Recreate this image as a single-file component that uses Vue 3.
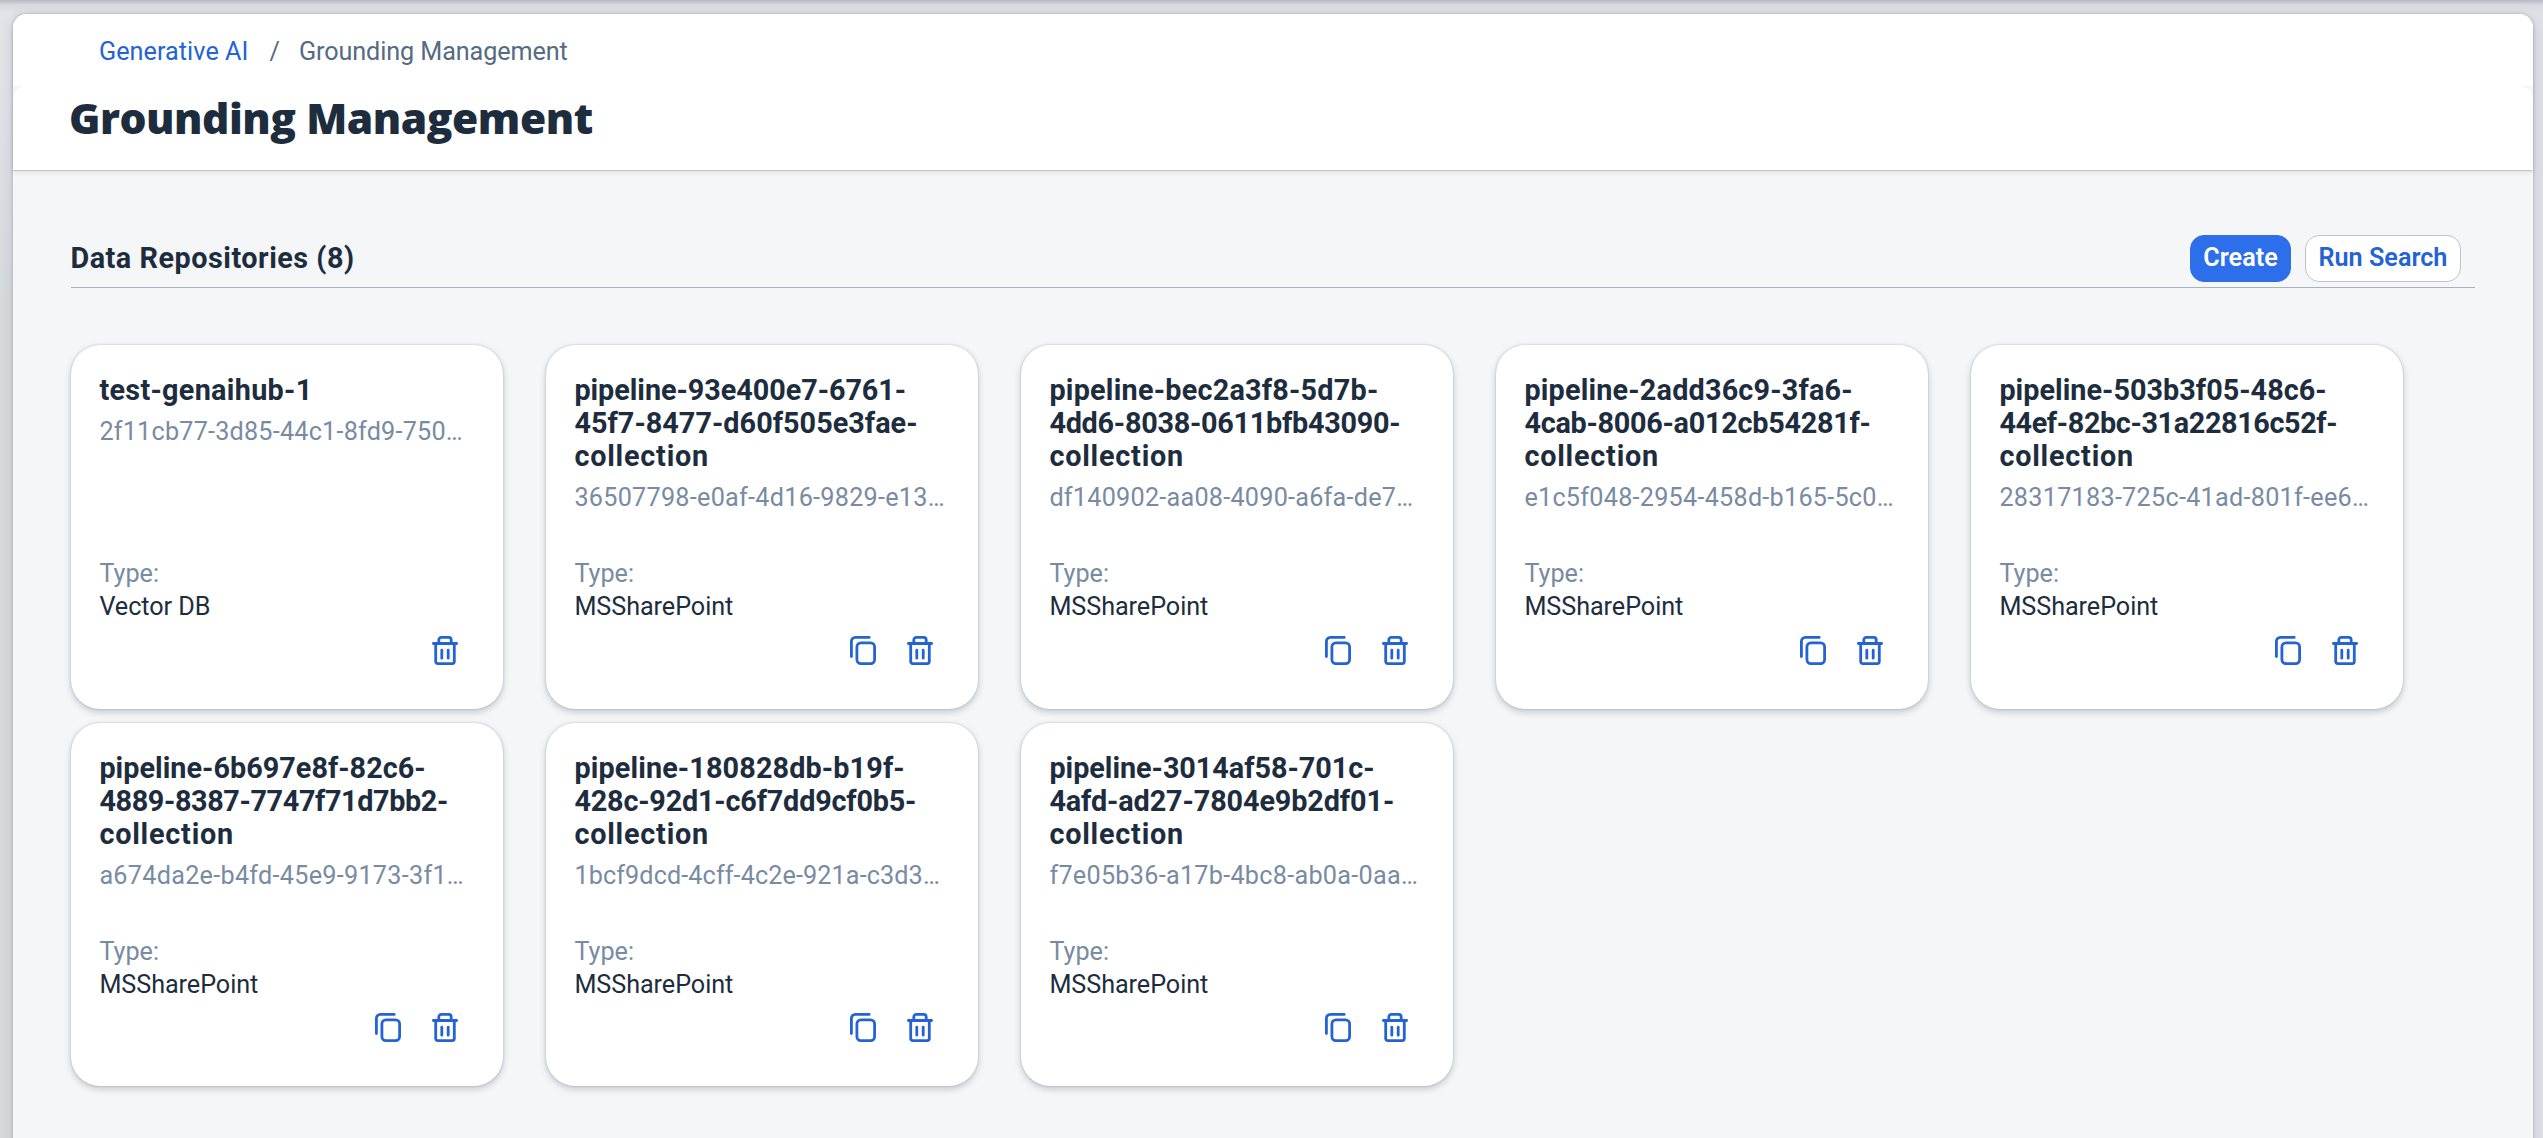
<script setup>
const type = 'MSSharePoint'
const tail = { text: 'collection', track: 0.78 }
const repositories = [
  { lines: [{ text: 'test-genaihub-1', track: 0.3 }], id: '2f11cb77-3d85-44c1-8fd9-750…', track: 0.22, type: 'Vector DB', copy: false },
  { lines: [{ text: 'pipeline-93e400e7-6761-', track: -0.05 }, { text: '45f7-8477-d60f505e3fae-', track: 0.03 }, tail], id: '36507798-e0af-4d16-9829-e13…', track: 0.27, type, copy: true },
  { lines: [{ text: 'pipeline-bec2a3f8-5d7b-', track: 0.22 }, { text: '4dd6-8038-0611bfb43090-', track: -0.26 }, tail], id: 'df140902-aa08-4090-a6fa-de7…', track: 0.25, type, copy: true },
  { lines: [{ text: 'pipeline-2add36c9-3fa6-', track: 0.18 }, { text: '4cab-8006-a012cb54281f-', track: -0.27 }, tail], id: 'e1c5f048-2954-458d-b165-5c0…', track: 0.26, type, copy: true },
  { lines: [{ text: 'pipeline-503b3f05-48c6-', track: 0.02 }, { text: '44ef-82bc-31a22816c52f-', track: -0.38 }, tail], id: '28317183-725c-41ad-801f-ee6…', track: 0.28, type, copy: true },
  { lines: [{ text: 'pipeline-6b697e8f-82c6-', track: 0.02 }, { text: '4889-8387-7747f71d7bb2-', track: -0.38 }, tail], id: 'a674da2e-b4fd-45e9-9173-3f1…', track: 0.28, type, copy: true },
  { lines: [{ text: 'pipeline-180828db-b19f-', track: 0.12 }, { text: '428c-92d1-c6f7dd9cf0b5-', track: -0.19 }, tail], id: '1bcf9dcd-4cff-4c2e-921a-c3d3…', track: 0.11, type, copy: true },
  { lines: [{ text: 'pipeline-3014af58-701c-', track: -0.04 }, { text: '4afd-ad27-7804e9b2df01-', track: -0.11 }, tail], id: 'f7e05b36-a17b-4bc8-ab0a-0aa…', track: 0.28, type, copy: true },
]
</script>

<template>
  <div class="shell">
    <main class="page">
      <header class="header">
        <nav class="crumbs">
          <a class="crumb-link">Generative AI</a>
          <span class="crumb-sep">/</span>
          <span class="crumb-current">Grounding Management</span>
        </nav>
        <div class="title-bar">
          <h1 class="title">Grounding Management</h1>
        </div>
      </header>

      <section class="content">
        <div class="toolbar">
          <h2 class="toolbar-title">Data Repositories (8)</h2>
          <div class="toolbar-actions">
            <button class="btn btn-primary">Create</button>
            <button class="btn btn-default">Run Search</button>
          </div>
        </div>

        <div class="grid">
          <article v-for="repo in repositories" :key="repo.id" class="card">
            <div class="card-head">
              <h3 class="card-title">
                <span
                  v-for="line in repo.lines"
                  :key="line.text"
                  class="card-line"
                  :style="{ letterSpacing: line.track + 'px' }"
                >{{ line.text }}</span>
              </h3>
              <div class="card-id" :style="{ letterSpacing: repo.track + 'px' }">{{ repo.id }}</div>
            </div>
            <div class="card-label">Type:</div>
            <div class="card-value">{{ repo.type }}</div>
            <div class="card-actions">
              <svg v-if="repo.copy" class="icon" viewBox="0 0 26 29">
                <path d="M1.4 20.5V5.4a4 4 0 0 1 4-4h13.8" />
                <rect x="6.9" y="6.9" width="17.7" height="20.7" rx="4" />
              </svg>
              <svg class="icon" viewBox="0 0 26 29">
                <path d="M1.4 7.5h23.2M6.8 7.5V3.9a2.5 2.5 0 0 1 2.5-2.5h7.4a2.5 2.5 0 0 1 2.5 2.5v3.6M3.7 7.5v18.1a2 2 0 0 0 2 2h14.6a2 2 0 0 0 2-2V7.5M9.8 14.2v8M16.2 14.2v8" />
              </svg>
            </div>
          </article>
        </div>
      </section>
    </main>
  </div>
</template>

<style>
body {
  background: #dcdfe3;
}
</style>

<style scoped>
.shell {
  box-sizing: border-box;
  height: 1138px;
  padding: 14px 10px 0 13px;
  overflow: hidden;
  background:
    linear-gradient(#b5b8c3 0, rgba(214, 216, 222, 0.8) 5px, rgba(225, 227, 231, 0) 12px),
    linear-gradient(#e1e3e7 60px, rgba(225, 227, 231, 0) 300px) left / 13px 100% no-repeat,
    linear-gradient(90deg, #d5dadd 13px, #dfe0e5 13px);
  font-family: Roboto, "Liberation Sans", sans-serif;
  color: #1d2d3e;
}
.page {
  height: 1140px;
  border-radius: 14px 14px 0 0;
  background: #f5f6f8;
  box-shadow: 0 0 3px rgba(34, 53, 72, 0.25), 0 4px 14px rgba(34, 53, 72, 0.12);
}
.header {
  height: 156px;
  border-radius: 14px 14px 0 0;
  background: #f5f6f8;
  box-shadow: 0 1px 1px rgba(34, 53, 72, 0.2), 0 2px 5px rgba(34, 53, 72, 0.1);
}
.crumbs {
  box-sizing: border-box;
  display: flex;
  height: 72px;
  padding-left: 86px;
  border-radius: 14px 14px 0 0;
  background: #fff;
  font-size: 25.2px;
  line-height: 76px;
}
.crumb-link {
  width: 170.5px;
  letter-spacing: 0.05px;
  color: #2463d4;
}
.crumb-sep {
  width: 29.5px;
  color: #556b82;
}
.crumb-current {
  color: #556b82;
  letter-spacing: -0.1px;
}
.title-bar {
  height: 84px;
  padding-left: 56px;
  border-radius: 14px 14px 0 0;
  background: #fff;
}
.title {
  margin: 0;
  font-family: "Open Sans", Roboto, sans-serif;
  font-size: 42.5px;
  font-weight: 800;
  line-height: 64px;
  letter-spacing: -0.47px;
}
.content {
  padding: 58px 58px 0;
}
.toolbar {
  box-sizing: border-box;
  display: flex;
  height: 60px;
  padding: 7px 14px 5px 0;
  justify-content: space-between;
  border-bottom: 1px solid #a8b1bd;
}
.toolbar-title {
  margin: 0 0 0 -0.6px;
  font-size: 28.8px;
  font-weight: 700;
  line-height: 47px;
  letter-spacing: 0.52px;
}
.toolbar-actions {
  display: flex;
  gap: 14px;
}
.btn {
  box-sizing: border-box;
  height: 47px;
  padding: 0 0 2px;
  border: 1px solid #bcc3ca;
  border-radius: 14px;
  font: 600 25.2px/43px Roboto, "Liberation Sans", sans-serif;
}
.btn-primary {
  width: 101px;
  border-color: #2d6eeb;
  background: #2d6eeb;
  color: #fff;
}
.btn-default {
  width: 156px;
  background: #fff;
  color: #2463d4;
}
.grid {
  display: grid;
  grid-template-columns: repeat(5, 432px);
  grid-template-rows: 364px 363px;
  gap: 14px 43px;
  margin-top: 57px;
}
.card {
  box-sizing: border-box;
  display: flex;
  flex-direction: column;
  padding: 29px 29px 44px 28.4px;
  border-radius: 29px;
  background: #fff;
  box-shadow: 0 0 2px rgba(34, 53, 72, 0.28), 0 3px 7px rgba(34, 53, 72, 0.24);
}
.card-head {
  height: 183px;
}
.card-title {
  margin: 0;
  font-size: 28.8px;
  font-weight: 700;
  line-height: 33px;
}
.card-line {
  display: block;
  white-space: nowrap;
}
.card-id {
  margin-top: 9px;
  color: #788ba3;
  font-size: 25.2px;
  line-height: 32px;
  white-space: nowrap;
}
.card-label,
.card-value {
  font-size: 25.2px;
  line-height: 33px;
}
.card-label {
  color: #788ba3;
}
.card-value {
  letter-spacing: -0.05px;
}
.card-actions {
  display: flex;
  justify-content: flex-end;
  gap: 31.5px;
  margin-top: auto;
  padding-right: 16px;
}
.icon {
  width: 26px;
  height: 29px;
  fill: none;
  stroke: #2463d4;
  stroke-width: 2.8;
  stroke-linecap: round;
  stroke-linejoin: round;
}
</style>
